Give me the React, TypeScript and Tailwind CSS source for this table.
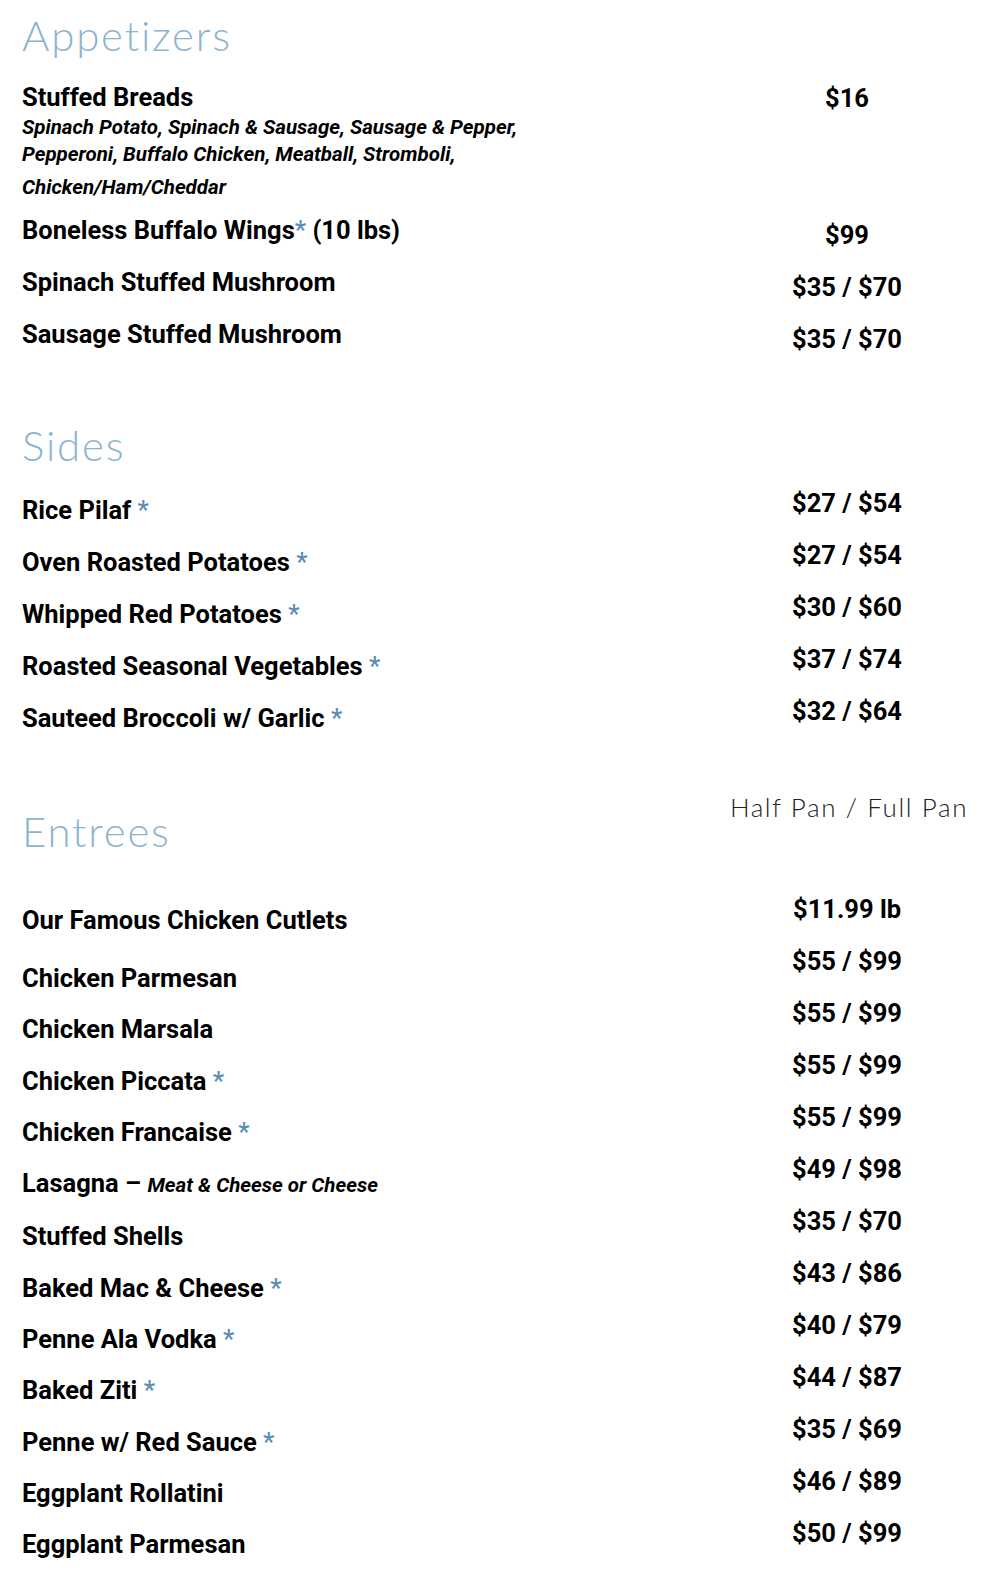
const body = "font-['Roboto',_'Liberation_Sans',_sans-serif]";
const thin = "font-['Lato',_'Open_Sans',_sans-serif] font-light";

type Item = { name: string; star?: boolean; note?: string };

const sides: Item[] = [
  { name: "Rice Pilaf", star: true },
  { name: "Oven Roasted Potatoes", star: true },
  { name: "Whipped Red Potatoes", star: true },
  { name: "Roasted Seasonal Vegetables", star: true },
  { name: "Sauteed Broccoli w/ Garlic", star: true },
];
const sidePrices = ["$27 / $54", "$27 / $54", "$30 / $60", "$37 / $74", "$32 / $64"];

const entrees: Item[] = [
  { name: "Chicken Parmesan" },
  { name: "Chicken Marsala" },
  { name: "Chicken Piccata", star: true },
  { name: "Chicken Francaise", star: true },
  { name: "Lasagna", note: "Meat & Cheese or Cheese" },
  { name: "Stuffed Shells" },
  { name: "Baked Mac & Cheese", star: true },
  { name: "Penne Ala Vodka", star: true },
  { name: "Baked Ziti", star: true },
  { name: "Penne w/ Red Sauce", star: true },
  { name: "Eggplant Rollatini" },
  { name: "Eggplant Parmesan" },
];
const entreePrices = [
  "$11.99 lb",
  "$55 / $99",
  "$55 / $99",
  "$55 / $99",
  "$55 / $99",
  "$49 / $98",
  "$35 / $70",
  "$43 / $86",
  "$40 / $79",
  "$44 / $87",
  "$35 / $69",
  "$46 / $89",
  "$50 / $99",
];

function Star() {
  return <span className="font-medium text-[#5a8db3]"> *</span>;
}

function Heading({ children, className }: { children: string; className: string }) {
  return (
    <h2 className={`${thin} text-[42px] leading-[52px] tracking-[1.8px] text-[#8db4cf] ${className}`}>
      {children}
    </h2>
  );
}

function Name({ item }: { item: Item }) {
  return (
    <p className="text-[25.5px] font-bold leading-[51.3px]">
      {item.name}
      {item.note && (
        <>
          {" – "}
          <span className="text-[20.5px] italic">{item.note}</span>
        </>
      )}
      {item.star && <Star />}
    </p>
  );
}

function Price({ children }: { children: string }) {
  return <p className="text-center text-[25.5px] font-bold leading-[52px]">{children}</p>;
}

export default function App() {
  return (
    <div className={`min-h-screen bg-white text-black ${body}`}>
      <section className="flex h-[380px]">
        <div className="flex-1 pl-[22px]">
          <Heading className="mt-[9px]">Appetizers</Heading>
          <p className="mt-[20px] text-[25.5px] font-bold leading-[32px]">Stuffed Breads</p>
          <p className="mt-px text-[20.5px] font-bold italic leading-[27px]">
            Spinach Potato, Spinach &amp; Sausage, Sausage &amp; Pepper,
            <br />
            Pepperoni, Buffalo Chicken, Meatball, Stromboli,
          </p>
          <p className="mt-[5px] text-[20.5px] font-bold italic leading-[28px]">Chicken/Ham/Cheddar</p>
          <div className="mt-[3px] text-[25.5px] font-bold leading-[52px]">
            <p>
              Boneless Buffalo Wings<span className="font-medium text-[#5a8db3]">*</span> (10 lbs)
            </p>
            <p>Spinach Stuffed Mushroom</p>
            <p>Sausage Stuffed Mushroom</p>
          </div>
        </div>
        <div className="mr-[23px] w-[260px]">
          <div className="mt-[72px]">
            <Price>$16</Price>
          </div>
          <div className="mt-[85px]">
            <Price>$99</Price>
            <Price>$35 / $70</Price>
            <Price>$35 / $70</Price>
          </div>
        </div>
      </section>

      <section className="flex h-[380px]">
        <div className="flex-1 pl-[22px]">
          <Heading className="mt-[39px]">Sides</Heading>
          <div className="mt-[13px] [&>p]:leading-[52px]">
            {sides.map((s) => (
              <Name key={s.name} item={s} />
            ))}
          </div>
        </div>
        <div className="mr-[23px] w-[260px]">
          <div className="mt-[97px]">
            {sidePrices.map((p, i) => (
              <Price key={i}>{p}</Price>
            ))}
          </div>
        </div>
      </section>

      <section className="flex">
        <div className="flex-1 pl-[22px]">
          <Heading className="mt-[45px]">Entrees</Heading>
          <p className="mt-[37px] mb-[7px] text-[25.5px] font-bold leading-[52px]">Our Famous Chicken Cutlets</p>
          {entrees.map((e) => (
            <Name key={e.name} item={e} />
          ))}
        </div>
        <div className="mr-[23px] w-[260px]">
          <p
            className={`${thin} mt-[31px] whitespace-nowrap pl-[4px] text-center text-[26px] leading-[32px] tracking-[1.6px] text-[#222]`}
          >
            Half Pan / Full Pan
          </p>
          <div className="mt-[60px]">
            {entreePrices.map((p, i) => (
              <Price key={i}>{p}</Price>
            ))}
          </div>
        </div>
      </section>
    </div>
  );
}
